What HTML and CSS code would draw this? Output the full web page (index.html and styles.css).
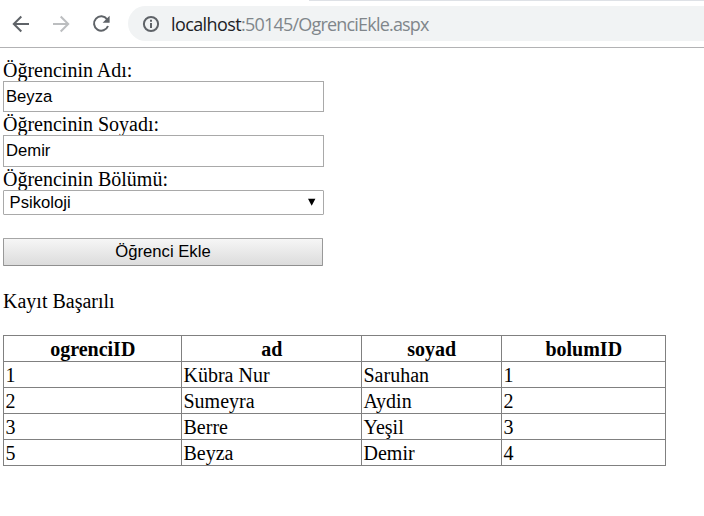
FILE: index.html
```html
<!DOCTYPE html>
<html lang="tr">
<head>
<meta charset="utf-8">
<title>OgrenciEkle</title>
<link rel="stylesheet" href="styles.css">
</head>
<body>
<header class="toolbar">
  <svg class="nav" width="20" height="20" viewBox="0 0 20 20"><path d="M18 10H3M10.3 2.5L2.8 10l7.5 7.5"/></svg>
  <svg class="nav nav-off" width="20" height="20" viewBox="0 0 20 20"><path d="M2 10h15M9.7 2.5l7.5 7.5-7.5 7.5"/></svg>
  <svg class="nav" width="20" height="20" viewBox="0 0 20 20"><path d="M16.1 5.3A7.2 7.2 0 1 0 17 12"/><path class="solid" d="M18.6 1.8v7h-7z"/></svg>
  <div class="address">
    <svg class="info" width="18" height="18" viewBox="0 0 18 18"><circle cx="9" cy="9" r="7.1"/><path d="M9 8v5M9 4.8v2"/></svg>
    <span class="url"><b>localhost</b>:50145/OgrenciEkle.aspx</span>
  </div>
</header>
<main>
  <form>
    <label for="ad">Öğrencinin Adı:</label>
    <input class="box" id="ad" type="text" value="Beyza">
    <label for="soyad">Öğrencinin Soyadı:</label>
    <input class="box box-tall" id="soyad" type="text" value="Demir">
    <label for="bolum">Öğrencinin Bölümü:</label>
    <div class="picker">
      <select id="bolum"><option>Psikoloji</option></select>
      <svg class="caret" width="8" height="8" viewBox="0 0 8 8"><path d="M0 .7h7.4L3.7 7.8z"/></svg>
    </div>
    <button type="button">Öğrenci Ekle</button>
  </form>
  <p>Kayıt Başarılı</p>
  <table>
    <colgroup><col class="c1"><col class="c2"><col class="c3"><col class="c4"></colgroup>
    <tr><th>ogrenciID</th><th>ad</th><th>soyad</th><th>bolumID</th></tr>
    <tr><td>1</td><td>Kübra Nur</td><td>Saruhan</td><td>1</td></tr>
    <tr><td>2</td><td>Sumeyra</td><td>Aydin</td><td>2</td></tr>
    <tr><td>3</td><td>Berre</td><td>Yeşil</td><td>3</td></tr>
    <tr><td>5</td><td>Beyza</td><td>Demir</td><td>4</td></tr>
  </table>
</main>
</body>
</html>
```
FILE: styles.css
```css
* { box-sizing: border-box; }
body {
  margin: 0;
  background: #fff;
  color: #000;
  font: 20px/23px "Liberation Serif", serif;
  overflow: hidden;
}
.toolbar {
  height: 48px;
  padding: 6px 0 6px 11px;
  display: flex;
  align-items: center;
  gap: 20px;
  border-bottom: 1px solid #b2b2b4;
  background: linear-gradient(#dee1e6, #dee1e6) 309px 0 / 100% 1px no-repeat #fff;
}
.nav { flex: none; fill: none; stroke: #5f6368; stroke-width: 2; }
.nav-off { stroke: #bcbec0; }
.nav .solid { fill: #5f6368; stroke: none; }
.address {
  flex: 1;
  height: 35px;
  margin-left: -3px;
  padding-left: 14px;
  display: flex;
  align-items: center;
  gap: 11px;
  border-radius: 18px 0 0 18px;
  background: #f1f3f4;
}
.info { flex: none; fill: none; stroke: #5f6368; stroke-width: 2; }
.url {
  font: 18px/24px "Open Sans", "Noto Sans", sans-serif;
  letter-spacing: -0.8px;
  color: #80868b;
  white-space: nowrap;
}
.url b { font-weight: 400; letter-spacing: -0.6px; color: #202124; }
main { padding: 10px 3px 0; }
form { width: 321px; display: flex; flex-direction: column; }
label { height: 23px; line-height: 25px; }
.box, select, button {
  width: 100%;
  margin: 0;
  border: 1px solid #a9a9a9;
  border-radius: 0;
  background: #fff;
  color: #000;
  font: 16.67px "Liberation Sans", sans-serif;
  outline: 0;
}
.box { height: 31px; padding: 0 2px; }
.box-tall { height: 32px; }
.picker { position: relative; height: 25px; }
select { display: block; height: 25px; padding: 0 5.6px; appearance: none; border-radius: 1px; }
.caret { position: absolute; right: 8px; top: 8px; pointer-events: none; }
button {
  width: 320px;
  height: 28px;
  margin-top: 23px;
  padding: 0;
  border-color: #a6a6a6 #999 #8f8f8f;
  border-radius: 1px;
  background: linear-gradient(#f6f6f6, #dcdcdc);
}
p { margin: 23px 0; height: 23px; line-height: 25px; }
table { width: 663px; border-collapse: collapse; table-layout: fixed; }
th, td { height: 26px; padding: 2px 1px 0 1.5px; border: 1px solid #808080; text-align: left; }
th { text-align: center; }
.c1 { width: 178px; }
.c2 { width: 180px; }
.c3 { width: 140px; }
.c4 { width: 164px; }
```
